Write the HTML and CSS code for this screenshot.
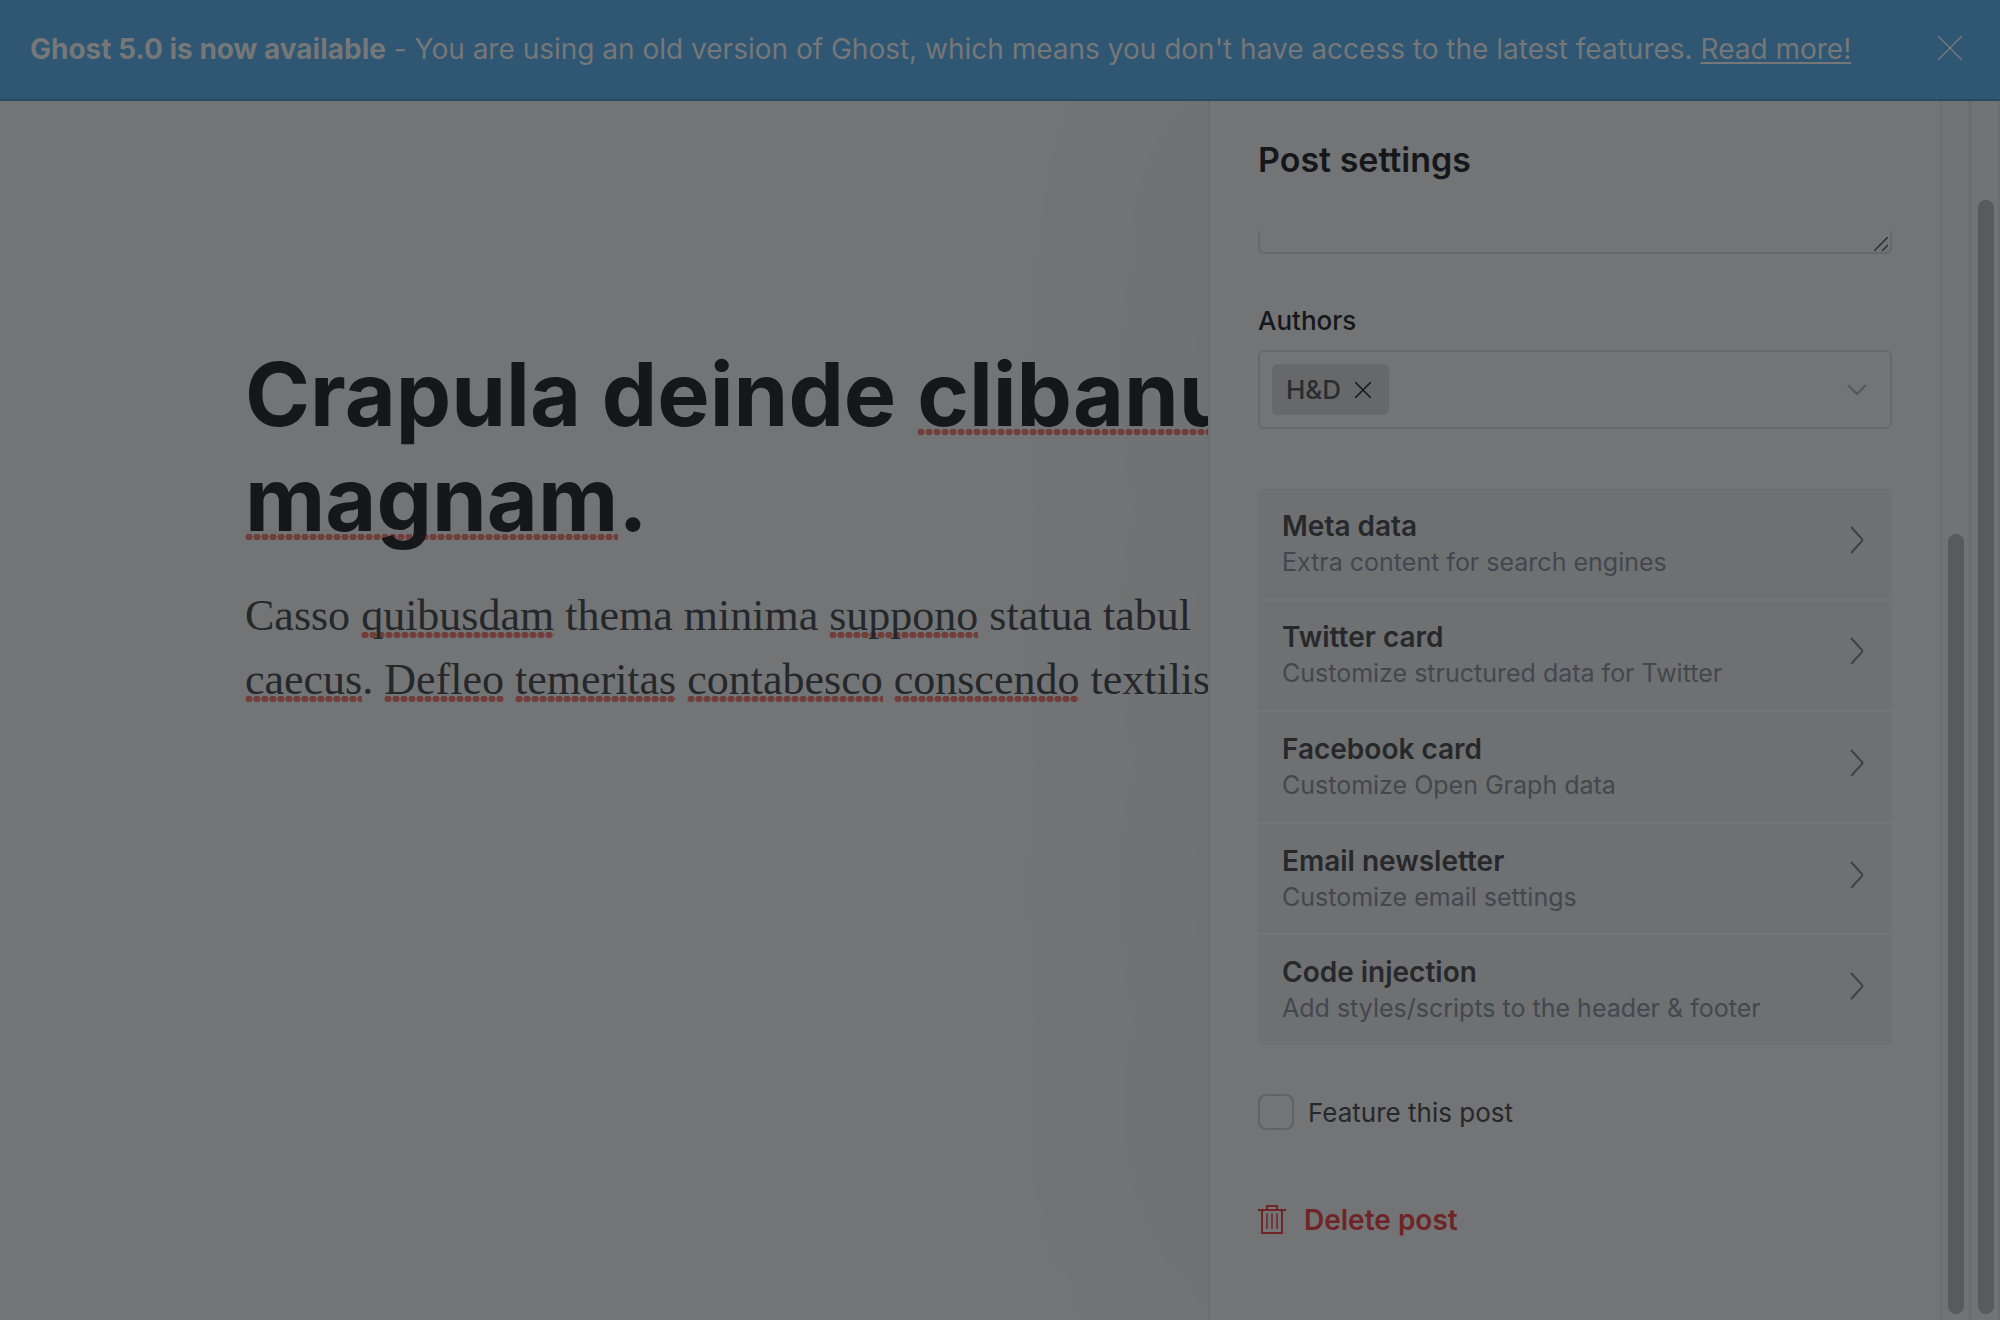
FILE: index.html
```html
<!DOCTYPE html>
<html lang="en">
<head>
<meta charset="utf-8">
<title>Post settings</title>
<link rel="stylesheet" href="styles.css">
</head>
<body>
<header class="banner">
  <p class="banner-text"><strong>Ghost 5.0 is now available</strong> - You are using an old version of Ghost, which means you don't have access to the latest features. <a class="banner-link" href="#more">Read more!</a></p>
  <button class="banner-close" type="button" aria-label="Close">
    <svg width="24" height="24" viewBox="0 0 24 24"><path d="M0 0L24 24M24 0L0 24"/></svg>
  </button>
</header>
<div class="workspace">
  <main class="editor">
    <article class="draft">
      <h1 class="draft-title">Crapula deinde <span class="misspelt">clibanu</span><br><span class="misspelt">magnam</span>.</h1>
      <p class="draft-body">Casso <span class="misspelt">quibusdam</span> thema minima <span class="misspelt">suppono</span> statua tabul<br><span class="misspelt">caecus</span>. <span class="misspelt">Defleo</span> <span class="misspelt">temeritas</span> <span class="misspelt">contabesco</span> <span class="misspelt">conscendo</span> textilis</p>
    </article>
  </main>
  <aside class="panel">
    <h2 class="panel-title">Post settings</h2>
    <div class="panel-scroll">
      <div class="excerpt">
        <textarea class="excerpt-input" aria-label="Excerpt"></textarea>
        <svg class="excerpt-grip" width="14" height="14" viewBox="0 0 14 14"><path d="M0 14L14 0M8 14L14 8"/></svg>
      </div>
      <label class="field-label" for="authors">Authors</label>
      <div class="authors">
        <span class="chip">H&amp;D
          <button class="chip-remove" type="button" aria-label="Remove H&amp;D"><svg width="16" height="16" viewBox="0 0 16 16"><path d="M0 0L16 16M16 0L0 16"/></svg></button>
        </span>
        <input class="authors-input" id="authors" type="text">
        <svg class="authors-arrow" width="20" height="12" viewBox="0 0 20 12"><path d="M1 1L10 10L19 1"/></svg>
      </div>
      <nav class="sections">
        <button class="section" type="button"><span class="section-text"><span class="section-name">Meta data</span><span class="section-note">Extra content for search engines</span></span><svg class="section-arrow" width="16" height="28" viewBox="0 0 16 28"><path d="M2 1L13 13Q14 14 13 15L2 27"/></svg></button>
        <button class="section" type="button"><span class="section-text"><span class="section-name">Twitter card</span><span class="section-note">Customize structured data for Twitter</span></span><svg class="section-arrow" width="16" height="28" viewBox="0 0 16 28"><path d="M2 1L13 13Q14 14 13 15L2 27"/></svg></button>
        <button class="section" type="button"><span class="section-text"><span class="section-name">Facebook card</span><span class="section-note">Customize Open Graph data</span></span><svg class="section-arrow" width="16" height="28" viewBox="0 0 16 28"><path d="M2 1L13 13Q14 14 13 15L2 27"/></svg></button>
        <button class="section" type="button"><span class="section-text"><span class="section-name">Email newsletter</span><span class="section-note">Customize email settings</span></span><svg class="section-arrow" width="16" height="28" viewBox="0 0 16 28"><path d="M2 1L13 13Q14 14 13 15L2 27"/></svg></button>
        <button class="section" type="button"><span class="section-text"><span class="section-name">Code injection</span><span class="section-note">Add styles/scripts to the header &amp; footer</span></span><svg class="section-arrow" width="16" height="28" viewBox="0 0 16 28"><path d="M2 1L13 13Q14 14 13 15L2 27"/></svg></button>
      </nav>
      <label class="feature"><input class="feature-box" type="checkbox">Feature this post</label>
      <button class="delete" type="button">
        <svg width="28" height="30" viewBox="0 0 28 30"><path d="M0 5H28M9 5V1H19V5M4 5V28H24V5"/><path stroke-width="1.5" d="M9 8.500V24M14 8.500V24M19 8.500V24"/></svg>
        Delete post
      </button>
    </div>
  </aside>
  <div class="track track-panel"><div class="thumb"></div></div>
  <div class="track track-page"><div class="thumb"></div></div>
</div>
</body>
</html>
```
FILE: styles.css
```css
* {
  box-sizing: border-box;
}

body {
  display: flex;
  flex-direction: column;
  height: 100vh;
  margin: 0;
  overflow: hidden;
  background: #737476;
  color: #16171a;
  font-family: Inter, "Liberation Sans", sans-serif;
  font-size: 26px;
  font-variant-ligatures: none;
}

button {
  padding: 0;
  border: 0;
  background: none;
  font: inherit;
  color: inherit;
  text-align: left;
}

svg {
  display: block;
  flex: none;
  fill: none;
  stroke: currentColor;
  stroke-width: 2;
}

.banner {
  position: relative;
  z-index: 1;
  display: flex;
  flex: none;
  align-items: center;
  justify-content: space-between;
  padding: 28px 38px 28px 30px;
  border-bottom: 2px solid #294b64;
  background: #2f5672;
  color: #767778;
  font-size: 28px;
  line-height: 43px;
}

.banner-text {
  margin: 0;
  white-space: nowrap;
}

.banner-link {
  color: inherit;
  text-underline-offset: 3px;
  text-decoration-thickness: 2px;
}

.banner-close {
  padding-bottom: 3px;
}

.banner-close svg {
  stroke-width: 1.5;
}

.workspace {
  display: flex;
  flex: 1;
  min-height: 0;
}

.editor {
  flex: 1;
  min-width: 0;
  overflow: hidden;
}

.draft {
  padding: 241px 0 0 245px;
  white-space: nowrap;
}

.draft-title {
  margin: 0;
  font-size: 88px;
  font-weight: 700;
  line-height: 105px;
}

.draft-body {
  margin: 32px 0 0;
  color: #25282b;
  font-family: Georgia, "Liberation Serif", serif;
  font-size: 44px;
  line-height: 64px;
}

.misspelt {
  background: radial-gradient(circle, #713e3a 2px, #713e3a 3px, transparent 4px) left 0 bottom 2px / 8px 6px repeat-x;
}

.draft-title .misspelt {
  background-position: left 0 bottom 12px;
}

.panel {
  display: flex;
  flex: none;
  flex-direction: column;
  width: 732px;
  padding: 0 48px;
  border-left: 2px solid #6b6c6e;
  background: #737476;
  box-shadow: 0 0 250px rgba(0, 0, 0, 0.06);
}

.panel-title {
  margin: 39px 0 51px;
  font-size: 34px;
  font-weight: 600;
  line-height: 40px;
}

.panel-scroll {
  display: flex;
  flex: 1;
  flex-direction: column;
  align-items: flex-start;
  min-height: 0;
  overflow: hidden;
}

.excerpt {
  position: relative;
  align-self: stretch;
  margin-top: -80px;
}

.excerpt-input {
  display: block;
  width: 100%;
  height: 103px;
  border: 2px solid #67686a;
  border-radius: 6px;
  background: none;
  resize: none;
}

.excerpt-grip {
  position: absolute;
  right: 4px;
  bottom: 3px;
  color: #2c2d2f;
  stroke-width: 1.5;
}

.field-label {
  margin-top: 49px;
  font-weight: 500;
  line-height: 36px;
}

.authors {
  display: flex;
  align-self: stretch;
  align-items: center;
  height: 79px;
  margin-top: 11px;
  padding: 0 23px 0 12px;
  border: 2px solid #67686a;
  border-radius: 6px;
}

.chip {
  display: flex;
  gap: 14px;
  align-items: center;
  height: 51px;
  padding: 0 18px 0 14px;
  border-radius: 6px;
  background: #67686a;
  color: #2a2c2f;
  font-weight: 500;
}

.chip-remove {
  color: #16171a;
}

.chip-remove svg {
  stroke-width: 1.5;
}

.authors-input {
  flex: 1;
  min-width: 0;
  border: 0;
  background: none;
  font: inherit;
}

.authors-arrow {
  color: #56585b;
}

.sections {
  display: grid;
  grid-auto-rows: 1fr;
  gap: 2px;
  align-self: stretch;
  min-height: 556px;
  margin-top: 60px;
  border-radius: 6px;
  background: #747577;
  overflow: hidden;
}

.section {
  display: flex;
  align-items: center;
  justify-content: space-between;
  padding: 0 27px 0 24px;
  background: #6f7072;
}

.section-text {
  display: flex;
  flex-direction: column;
  padding-bottom: 2px;
}

.section-name {
  color: #26282b;
  font-size: 28px;
  font-weight: 600;
  line-height: 38px;
}

.section-note {
  color: #43474e;
  font-size: 25px;
  line-height: 34px;
}

.section-arrow {
  margin-bottom: 8px;
  color: #3f4349;
}

.feature {
  display: flex;
  gap: 14px;
  align-items: center;
  margin-top: 49px;
  color: #26282b;
}

.feature-box {
  width: 36px;
  height: 36px;
  margin: 0;
  border: 2px solid #616264;
  border-radius: 8px;
  appearance: none;
}

.delete {
  display: flex;
  gap: 18px;
  align-items: center;
  margin-top: 70px;
  color: #6f2426;
  font-size: 28px;
  font-weight: 600;
  line-height: 40px;
}

.track {
  display: flex;
  flex: none;
  background: #727375;
}

.track-panel {
  width: 28px;
  padding: 433px 4px 6px 6px;
  border-left: 2px solid #6b6c6e;
}

.track-page {
  width: 32px;
  padding: 99px 4px 6px 6px;
  border-left: 4px solid #6c6d6f;
  border-right: 2px solid #6c6d6f;
}

.thumb {
  width: 16px;
  border-radius: 8px;
  background: #595a5c;
}
```
